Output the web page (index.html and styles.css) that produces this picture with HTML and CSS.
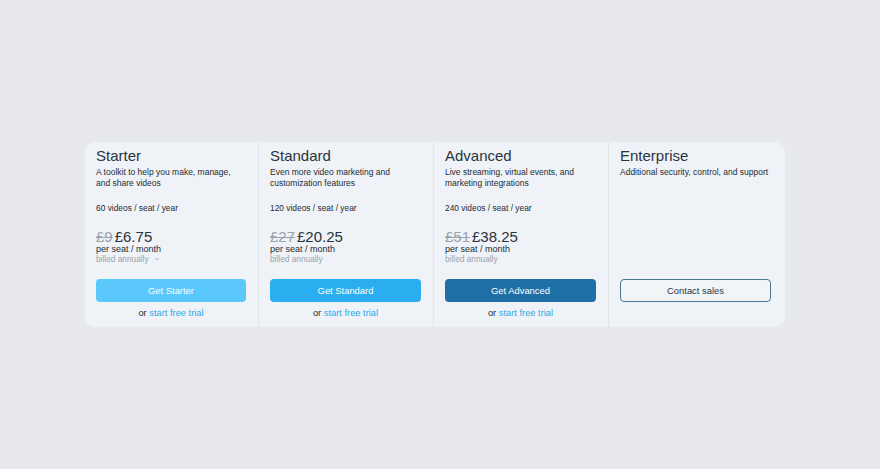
FILE: index.html
```html
<!DOCTYPE html>
<html lang="en">
<head>
<meta charset="utf-8">
<title>Pricing</title>
<link rel="stylesheet" href="styles.css">
</head>
<body>
<main class="pricing">
  <section class="plan">
    <h2 class="plan-name">Starter</h2>
    <p class="plan-desc">A toolkit to help you make, manage, and share videos</p>
    <p class="plan-quota">60 videos / seat / year</p>
    <div class="price"><s class="old">£9</s><span class="now">£6.75</span></div>
    <div class="per">per seat / month</div>
    <div class="billed">billed annually <svg class="chev" width="6" height="4" viewBox="0 0 6 4"><path d="M1 1l2 2 2-2" fill="none" stroke="#a3acb5" stroke-width="0.9"/></svg></div>
    <div class="cta">
      <a class="btn btn-starter">Get Starter</a>
      <p class="trial">or <a class="trial-link">start free trial</a></p>
    </div>
  </section>
  <section class="plan">
    <h2 class="plan-name">Standard</h2>
    <p class="plan-desc">Even more video marketing and customization features</p>
    <p class="plan-quota">120 videos / seat / year</p>
    <div class="price"><s class="old">£27</s><span class="now">£20.25</span></div>
    <div class="per">per seat / month</div>
    <div class="billed">billed annually</div>
    <div class="cta">
      <a class="btn btn-standard">Get Standard</a>
      <p class="trial">or <a class="trial-link">start free trial</a></p>
    </div>
  </section>
  <section class="plan">
    <h2 class="plan-name">Advanced</h2>
    <p class="plan-desc">Live streaming, virtual events, and marketing integrations</p>
    <p class="plan-quota">240 videos / seat / year</p>
    <div class="price"><s class="old">£51</s><span class="now">£38.25</span></div>
    <div class="per">per seat / month</div>
    <div class="billed">billed annually</div>
    <div class="cta">
      <a class="btn btn-advanced">Get Advanced</a>
      <p class="trial">or <a class="trial-link">start free trial</a></p>
    </div>
  </section>
  <section class="plan plan-last">
    <h2 class="plan-name">Enterprise</h2>
    <p class="plan-desc">Additional security, control, and support</p>
    <div class="cta">
      <a class="btn btn-contact">Contact sales</a>
      <p class="trial trial-empty"></p>
    </div>
  </section>
</main>
</body>
</html>
```

FILE: styles.css
```css
* { box-sizing: border-box; }
html, body { height: 100%; }
body {
  margin: 0;
  background: #e8e9ec;
  font-family: "Liberation Sans", Arial, sans-serif;
  color: #2a323b;
  display: flex;
  align-items: center;
  justify-content: center;
  padding-right: 10px;
}
.pricing {
  width: 700px;
  height: 185px;
  background: #eff3f7;
  border-radius: 10px;
  display: grid;
  grid-template-columns: 173px 175px 175px 177px;
}
.plan {
  display: flex;
  flex-direction: column;
  padding: 5px 12px 8px 11px;
}
.plan + .plan { border-left: 1px solid #e0e5ea; }
.plan-last { padding-right: 14px; }
.plan-name {
  margin: 0;
  font-size: 15px;
  line-height: 18px;
  font-weight: 400;
  color: #2b343d;
}
.plan-desc {
  margin: 2px 0 0;
  font-size: 8.5px;
  line-height: 11px;
  min-height: 22px;
  color: #232b33;
}
.plan-quota {
  margin: 14px 0 0;
  font-size: 8.4px;
  line-height: 11px;
  color: #232b33;
}
.price {
  margin-top: 16px;
  font-size: 15px;
  line-height: 14px;
  color: #2a323b;
}
.old {
  color: #9aa3ad;
  margin-right: 2px;
}
.per {
  font-size: 9px;
  line-height: 10px;
  color: #232b33;
}
.billed {
  font-size: 8.3px;
  line-height: 10px;
  color: #99a2ab;
}
.chev { margin-left: 3px; vertical-align: 1px; }
.cta { margin-top: auto; }
.btn {
  display: flex;
  align-items: center;
  justify-content: center;
  height: 23px;
  border-radius: 4px;
  font-size: 9.4px;
  color: #fff;
}
.btn-starter { background: #5ac8fb; }
.btn-standard { background: #2aaeef; }
.btn-advanced { background: #1e6fa5; }
.btn-contact {
  border: 1px solid #4a7594;
  color: #1e3548;
  background: #f1f5f8;
}
.trial {
  margin: 5px 0 0;
  height: 12px;
  font-size: 9.3px;
  line-height: 12px;
  text-align: center;
  color: #232b33;
}
.trial-link { color: #2aa9ea; }
```
